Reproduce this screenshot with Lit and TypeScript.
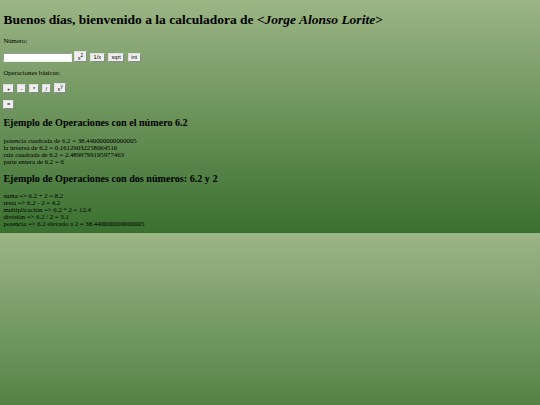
import { LitElement, html, css } from "lit";
import { customElement } from "lit/decorators.js";

@customElement("app-root")
export class AppRoot extends LitElement {
  static styles = css`
    :host {
      display: block;
      height: 405px;
      overflow: hidden;
      background: linear-gradient(#9cb585, #3a7030) 0 0 / 100% 233px repeat-y;
      color: #000;
    }
    .page {
      zoom: 0.421875;
      padding: 8px;
      font-family: "Liberation Serif", "Times New Roman", serif;
      font-size: 16px;
    }
    h1 { font-size: 32px; margin: 21.44px 0; font-weight: bold; }
    h2 { font-size: 24px; margin: 19.92px 0; font-weight: bold; }
    p { margin: 16px 0; }
    input {
      width: 153px; height: 15px; padding: 1px 2px; border: 2px inset #eee;
      background: #fff; font: 13.33px Arial, "Liberation Sans", sans-serif;
      vertical-align: baseline;
    }
    button {
      font: 13.33px "Liberation Sans", Arial, sans-serif;
      padding: 1px 6px; border: 2px outset #ddd; background: #efefef; color: #000;
      margin: 0 2px;
    }
    button:first-child { margin-left: 0; }
    sup { font-size: smaller; vertical-align: super; }
  `;

  render() {
    return html`<div class="page">
      <h1>Buenos días, bienvenido a la calculadora de <em>&lt;Jorge Alonso Lorite&gt;</em></h1>
      <p>Número:</p>
      <p>
        <input type="text" />
        <button>x<sup>2</sup></button>
        <button>1/x</button>
        <button>sqrt</button>
        <button>int</button>
      </p>
      <p>Operaciones básicas:</p>
      <p>
        <button>+</button>
        <button>-</button>
        <button>*</button>
        <button>/</button>
        <button>x<sup>y</sup></button>
      </p>
      <p><button>=</button></p>
      <h2>Ejemplo de Operaciones con el número 6.2</h2>
      <p>
        potencia cuadrada de 6.2 = 38.440000000000005<br />
        la inversa de 6.2 = 0.16129032258064516<br />
        raiz cuadrada de 6.2 = 2.4899799195977463<br />
        parte entera de 6.2 = 6
      </p>
      <h2>Ejemplo de Operaciones con dos números: 6.2 y 2</h2>
      <p>
        suma =&gt; 6.2 + 2 = 8.2<br />
        resta =&gt; 6.2 - 2 = 4.2<br />
        multiplicación =&gt; 6.2 * 2 = 12.4<br />
        división =&gt; 6.2 / 2 = 3.1<br />
        potencia =&gt; 6.2 elevado a 2 = 38.440000000000005
      </p>
    </div>`;
  }
}
